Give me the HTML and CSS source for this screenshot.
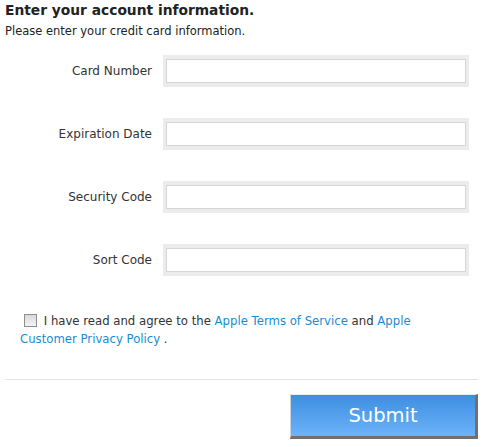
FILE: index.html
```html
<!DOCTYPE html>
<html lang="en">
<head>
<meta charset="utf-8">
<title>Account information</title>
<link rel="stylesheet" href="styles.css">
</head>
<body>
<div class="page">
  <h1 class="title">Enter your account information.</h1>
  <p class="subtitle">Please enter your credit card information.</p>
  <form class="form">
    <div class="row">
      <label class="label" for="cn">Card Number</label>
      <div class="field"><input class="input" id="cn" type="text"></div>
    </div>
    <div class="row">
      <label class="label" for="ed">Expiration Date</label>
      <div class="field"><input class="input" id="ed" type="text"></div>
    </div>
    <div class="row">
      <label class="label" for="sc">Security Code</label>
      <div class="field"><input class="input" id="sc" type="text"></div>
    </div>
    <div class="row">
      <label class="label" for="so">Sort Code</label>
      <div class="field"><input class="input" id="so" type="text"></div>
    </div>
    <p class="agree"><input class="check" type="checkbox"> I have read and agree to the <a class="link" href="#">Apple Terms of Service</a> and <a class="link" href="#">Apple Customer Privacy Policy</a> .</p>
    <hr class="rule">
    <div class="actions"><button class="submit" type="button">Submit</button></div>
  </form>
</div>
</body>
</html>
```

FILE: styles.css
```css
html, body {
  margin: 0;
  padding: 0;
  background: #ffffff;
}
body {
  font-family: "DejaVu Sans", Verdana, sans-serif;
  color: #333333;
}
.page {
  padding: 1px 7px 0 5px;
}
.title {
  margin: 0;
  font-size: 13.8px;
  line-height: 18px;
  font-weight: bold;
  color: #222222;
}
.subtitle {
  margin: 4px 0 0 0;
  font-size: 11.5px;
  line-height: 16px;
  color: #222222;
}
.form {
  margin: 0;
  padding-top: 16px;
}
.row {
  display: flex;
  align-items: center;
  gap: 11px;
  margin-bottom: 31px;
}
.label {
  width: 147px;
  text-align: right;
  font-size: 12px;
  color: #333333;
}
.field {
  width: 300px;
  padding: 4px 3px;
  background: #ececec;
}
.input {
  display: block;
  box-sizing: border-box;
  width: 300px;
  height: 24px;
  margin: 0;
  border: 1px solid #d6d6d6;
  background: #ffffff;
  outline: none;
}
.agree {
  margin: 36px 0 0 15px;
  font-size: 11.7px;
  line-height: 18px;
  color: #333333;
  width: 420px;
}
.check {
  appearance: none;
  -webkit-appearance: none;
  width: 13px;
  height: 13px;
  margin: 0 3px 0 4px;
  vertical-align: -2px;
  border: 1px solid #8e8e8e;
  box-sizing: border-box;
  background: linear-gradient(#d9d9d9, #f4f4f4);
}
.link {
  color: #1a8cd4;
  text-decoration: none;
}
.rule {
  margin: 31px 0 0 0;
  border: 0;
  height: 1px;
  background: #e2e2e2;
}
.actions {
  display: flex;
  justify-content: flex-end;
  padding-top: 14px;
}
.submit {
  width: 188px;
  height: 45px;
  margin: 0;
  padding: 0;
  box-sizing: border-box;
  border-style: solid;
  border-width: 1px 3px 3px 1px;
  border-color: #e8eef6 #707070 #707070 #c8d4e0;
  background: linear-gradient(#3d8ee2, #6cb3f9);
  color: #ffffff;
  font-family: "DejaVu Sans", Verdana, sans-serif;
  font-size: 19.5px;
  cursor: pointer;
}
```
